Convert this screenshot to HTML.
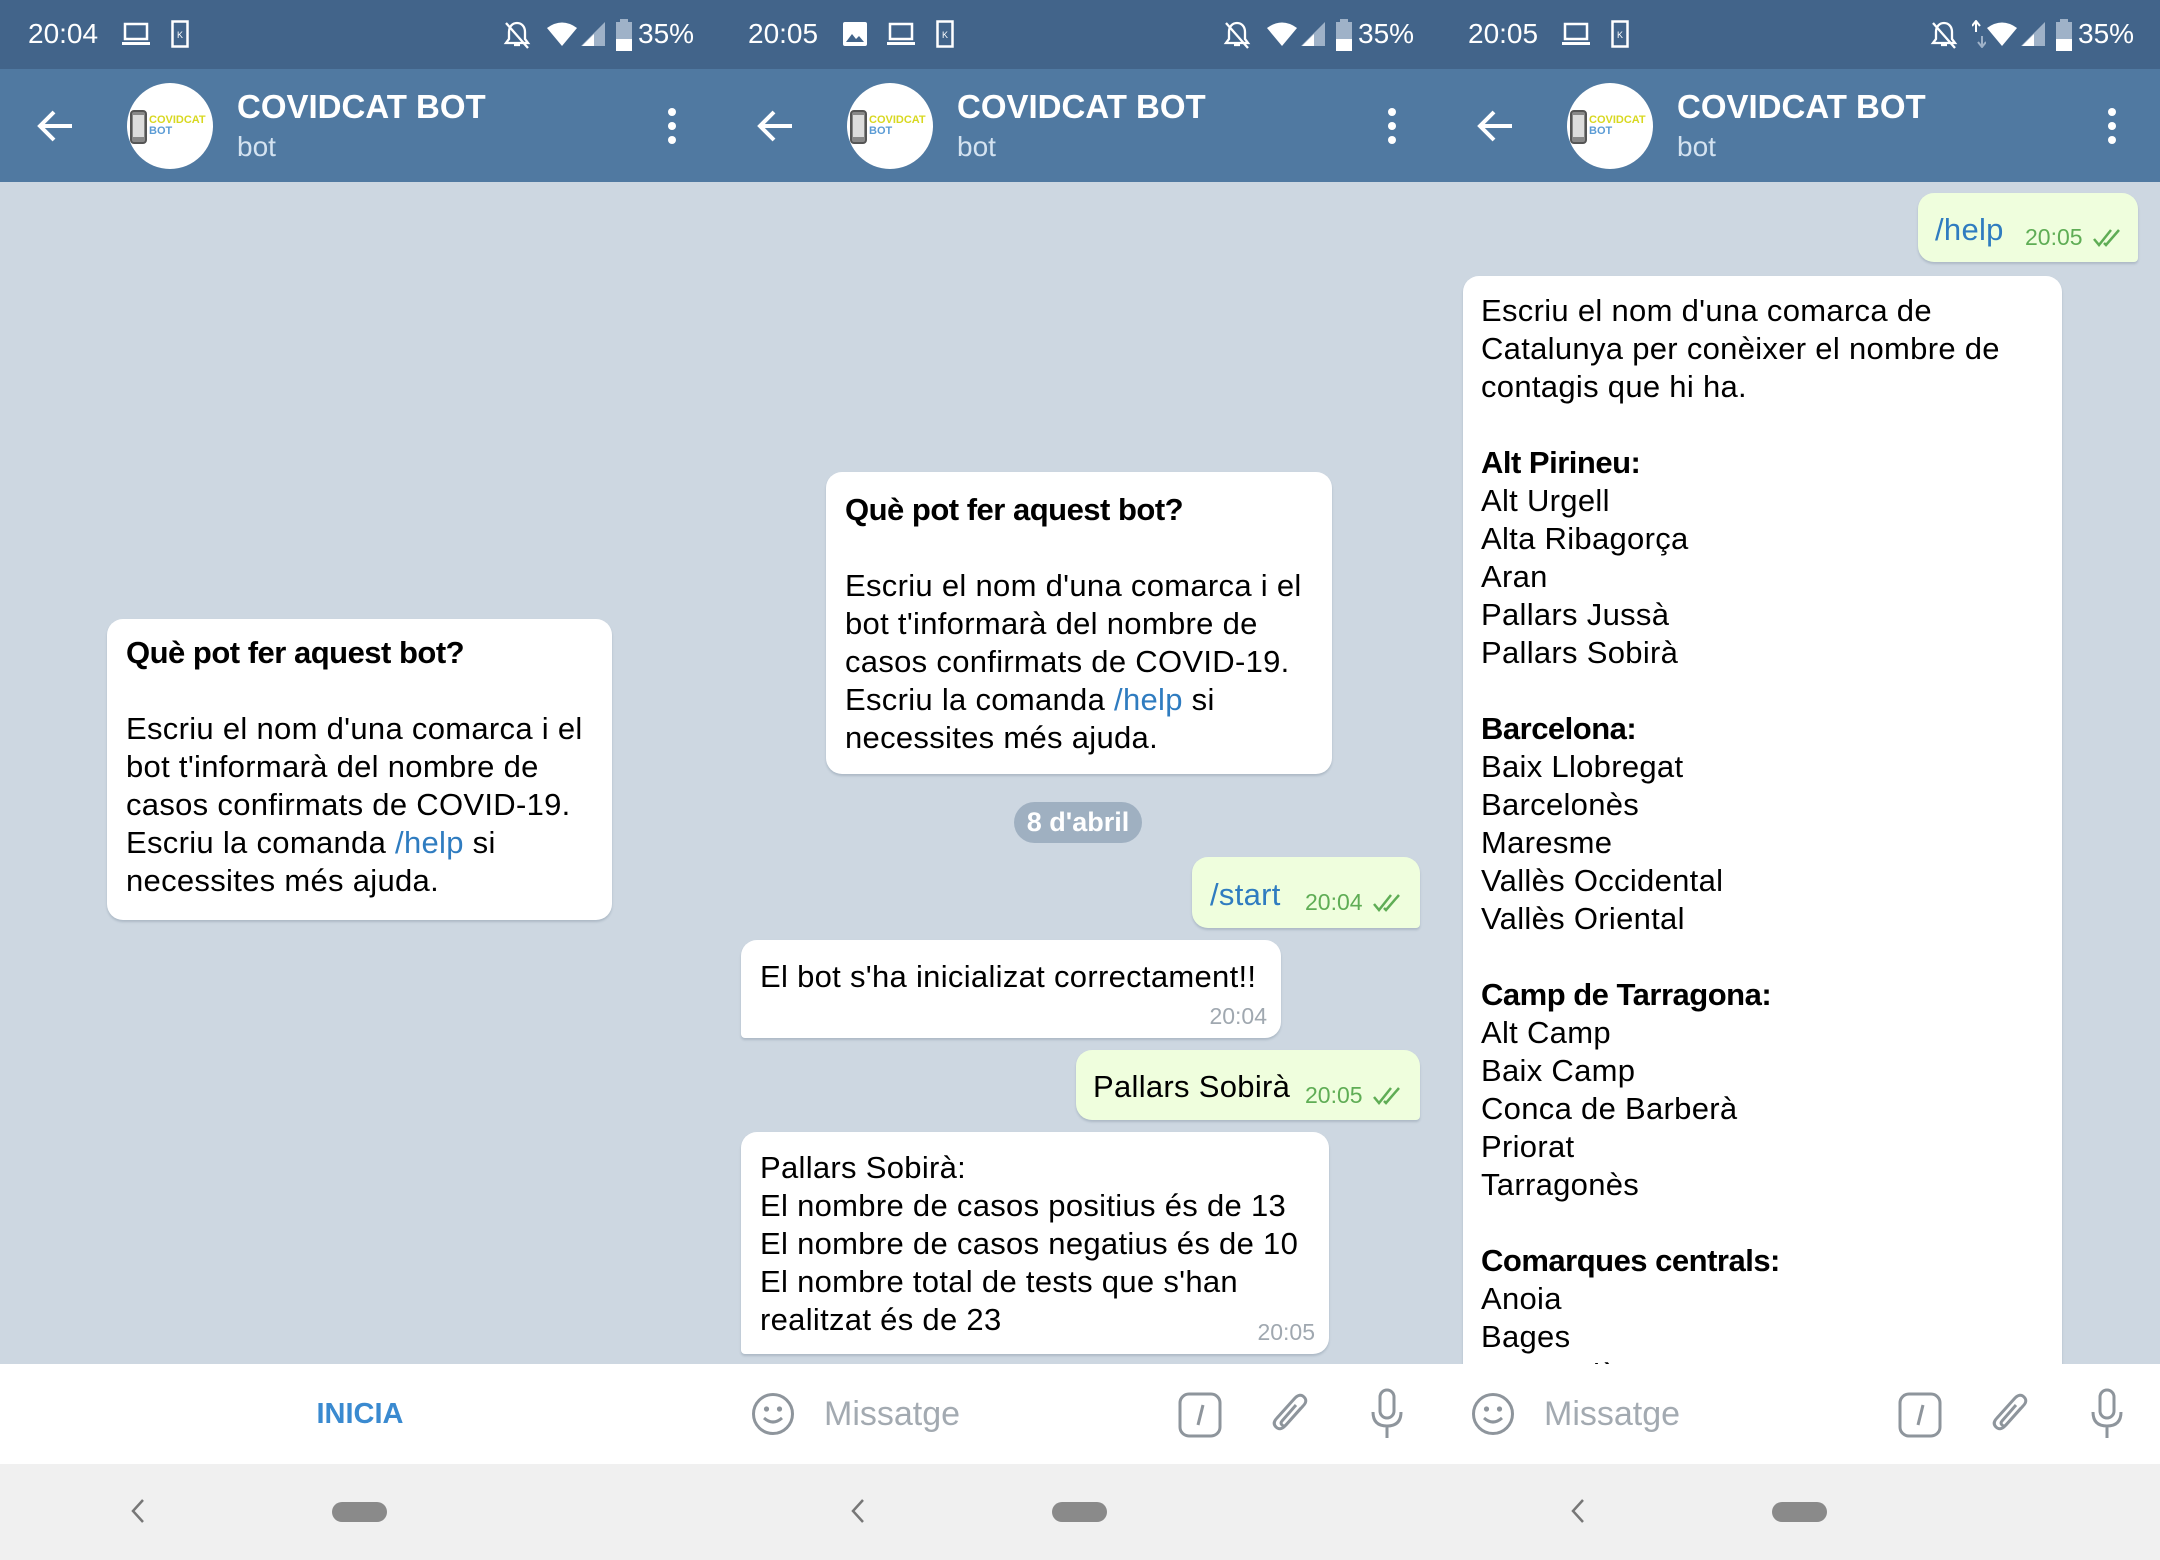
<!DOCTYPE html>
<html><head><meta charset="utf-8">
<style>
*{margin:0;padding:0;box-sizing:border-box}
body{width:2160px;height:1560px;overflow:hidden;position:relative;background:#cfd8e2;font-family:"Liberation Sans",Arial,sans-serif}
.panel{position:absolute;top:0;width:720px;height:1560px;overflow:hidden;background:#cdd7e1}
.sb{position:absolute;left:0;top:0;width:720px;height:69px;background:#42648a;color:#fff}
.hd{position:absolute;left:0;top:69px;width:720px;height:113px;background:#5079a1}
.abs{position:absolute}
.bub{position:absolute;background:#fff;border-radius:16px;box-shadow:0 2px 2px rgba(80,100,120,.25);font-size:31px;line-height:38px;color:#000;letter-spacing:0.3px}
.bub b{letter-spacing:-0.5px}
.out{background:#effedd}
.t{color:#a0a8b0;font-size:23px;letter-spacing:0}
.to{color:#5fad55;font-size:23px;letter-spacing:0}
.lnk{color:#2f7cc0}
.inp{position:absolute;left:0;top:1364px;width:720px;height:100px;background:#fff}
.nav{position:absolute;left:0;top:1464px;width:720px;height:96px;background:#f0f0f0}
.ph{position:absolute;left:104px;top:30px;font-size:34px;color:#a3aab1;line-height:40px}
.st{position:absolute;top:17px;font-size:28px;line-height:34px}
</style></head><body>

<!-- ============ PANEL 1 ============ -->
<div class="panel" style="left:0">
 <div class="sb">
  <div class="st" style="left:28px">20:04</div>
  <svg class="abs" style="left:121px;top:22px" width="30" height="26" viewBox="0 0 30 26"><rect x="4" y="2" width="22" height="15" fill="none" stroke="#fff" stroke-width="2.5"/><rect x="1" y="20" width="28" height="3" fill="#fff"/></svg>
  <svg class="abs" style="left:171px;top:20px" width="18" height="28" viewBox="0 0 18 28"><rect x="1.5" y="1.5" width="15" height="25" fill="none" stroke="#fff" stroke-width="2.5"/><text x="9" y="18" font-size="9" fill="#fff" text-anchor="middle" font-family="Liberation Sans">K</text></svg>
  <svg class="abs" style="left:503px;top:20px" width="28" height="30" viewBox="0 0 28 30"><path d="M14 3c-5 0-8 4-8 9v7l-3 4h22l-3-4v-7c0-5-3-9-8-9zM11 25h6" fill="none" stroke="#fff" stroke-width="2.3"/><path d="M3 3l22 25" stroke="#fff" stroke-width="2.3"/></svg>
  <svg class="abs" style="left:546px;top:21px" width="32" height="26" viewBox="0 0 32 26"><path d="M1 7Q16-4 31 7L16 25z" fill="#fff"/></svg>
  <svg class="abs" style="left:580px;top:21px" width="26" height="26" viewBox="0 0 26 26"><path d="M25 1V25H1z" fill="#9fb2c8"/><path d="M14 13V25H2z" fill="#fff"/></svg>
  <svg class="abs" style="left:615px;top:19px" width="18" height="32" viewBox="0 0 18 32"><rect x="5" y="0" width="8" height="4" fill="#9fb2c8"/><rect x="1" y="3" width="16" height="29" fill="#9fb2c8"/><rect x="1" y="20" width="16" height="12" fill="#fff"/></svg>
  <div class="st" style="left:638px">35%</div>
 </div>
 <div class="hd">
  <svg class="abs" style="left:36px;top:40px" width="38" height="34" viewBox="0 0 38 34"><path d="M36 17H4M18 3L4 17l14 14" fill="none" stroke="#fff" stroke-width="4"/></svg>
  <div class="abs" style="left:127px;top:14px;width:86px;height:86px;border-radius:50%;background:#fff"></div>
  <svg class="abs" style="left:129px;top:40px" width="80" height="36" viewBox="0 0 80 36"><rect x="2" y="2" width="15" height="32" rx="3" fill="#888" stroke="#555" stroke-width="2"/><rect x="4" y="6" width="11" height="22" fill="#ddd"/><text x="20" y="14" font-size="11" font-weight="bold" fill="#d8d820" font-family="Liberation Sans">COVIDCAT</text><text x="20" y="25" font-size="11" font-weight="bold" fill="#5a9bd5" font-family="Liberation Sans">BOT</text></svg>
  <div class="abs" style="left:237px;top:19px;font-size:33px;font-weight:bold;color:#fff;line-height:38px">COVIDCAT BOT</div>
  <div class="abs" style="left:237px;top:61px;font-size:28px;color:#d4e3f1;line-height:34px">bot</div>
  <svg class="abs" style="left:664px;top:36px" width="16" height="42" viewBox="0 0 16 42"><circle cx="8" cy="7" r="4" fill="#fff"/><circle cx="8" cy="21" r="4" fill="#fff"/><circle cx="8" cy="35" r="4" fill="#fff"/></svg>
 </div>

 <div class="bub" style="left:107px;top:619px;width:505px;height:301px;padding:15px 0 0 19px">
  <b>Què pot fer aquest bot?</b><br><br>Escriu el nom d'una comarca i el<br>bot t'informarà del nombre de<br>casos confirmats de COVID-19.<br>Escriu la comanda <span class="lnk">/help</span> si<br>necessites més ajuda.
 </div>

 <div class="inp"><div class="abs" style="left:0;width:720px;top:30px;text-align:center;font-size:29px;font-weight:bold;color:#3a8ad0;line-height:40px">INICIA</div></div>
 <div class="nav">
  <svg class="abs" style="left:130px;top:34px" width="16" height="26" viewBox="0 0 16 26"><path d="M13 2L3 13l10 11" fill="none" stroke="#777" stroke-width="2.5"/></svg>
  <div class="abs" style="left:332px;top:38px;width:55px;height:20px;border-radius:10px;background:#8a8a8a"></div>
 </div>
</div>

<!-- ============ PANEL 2 ============ -->
<div class="panel" style="left:720px">
 <div class="sb">
  <div class="st" style="left:28px">20:05</div>
  <svg class="abs" style="left:122px;top:21px" width="26" height="26" viewBox="0 0 26 26"><rect x="1" y="1" width="24" height="24" rx="2" fill="#fff"/><path d="M4 21l6-8 4 5 3-3 5 6z" fill="#42648a"/></svg>
  <svg class="abs" style="left:166px;top:22px" width="30" height="26" viewBox="0 0 30 26"><rect x="4" y="2" width="22" height="15" fill="none" stroke="#fff" stroke-width="2.5"/><rect x="1" y="20" width="28" height="3" fill="#fff"/></svg>
  <svg class="abs" style="left:216px;top:20px" width="18" height="28" viewBox="0 0 18 28"><rect x="1.5" y="1.5" width="15" height="25" fill="none" stroke="#fff" stroke-width="2.5"/><text x="9" y="18" font-size="9" fill="#fff" text-anchor="middle" font-family="Liberation Sans">K</text></svg>
  <svg class="abs" style="left:503px;top:20px" width="28" height="30" viewBox="0 0 28 30"><path d="M14 3c-5 0-8 4-8 9v7l-3 4h22l-3-4v-7c0-5-3-9-8-9zM11 25h6" fill="none" stroke="#fff" stroke-width="2.3"/><path d="M3 3l22 25" stroke="#fff" stroke-width="2.3"/></svg>
  <svg class="abs" style="left:546px;top:21px" width="32" height="26" viewBox="0 0 32 26"><path d="M1 7Q16-4 31 7L16 25z" fill="#fff"/></svg>
  <svg class="abs" style="left:580px;top:21px" width="26" height="26" viewBox="0 0 26 26"><path d="M25 1V25H1z" fill="#9fb2c8"/><path d="M14 13V25H2z" fill="#fff"/></svg>
  <svg class="abs" style="left:615px;top:19px" width="18" height="32" viewBox="0 0 18 32"><rect x="5" y="0" width="8" height="4" fill="#9fb2c8"/><rect x="1" y="3" width="16" height="29" fill="#9fb2c8"/><rect x="1" y="20" width="16" height="12" fill="#fff"/></svg>
  <div class="st" style="left:638px">35%</div>
 </div>
 <div class="hd">
  <svg class="abs" style="left:36px;top:40px" width="38" height="34" viewBox="0 0 38 34"><path d="M36 17H4M18 3L4 17l14 14" fill="none" stroke="#fff" stroke-width="4"/></svg>
  <div class="abs" style="left:127px;top:14px;width:86px;height:86px;border-radius:50%;background:#fff"></div>
  <svg class="abs" style="left:129px;top:40px" width="80" height="36" viewBox="0 0 80 36"><rect x="2" y="2" width="15" height="32" rx="3" fill="#888" stroke="#555" stroke-width="2"/><rect x="4" y="6" width="11" height="22" fill="#ddd"/><text x="20" y="14" font-size="11" font-weight="bold" fill="#d8d820" font-family="Liberation Sans">COVIDCAT</text><text x="20" y="25" font-size="11" font-weight="bold" fill="#5a9bd5" font-family="Liberation Sans">BOT</text></svg>
  <div class="abs" style="left:237px;top:19px;font-size:33px;font-weight:bold;color:#fff;line-height:38px">COVIDCAT BOT</div>
  <div class="abs" style="left:237px;top:61px;font-size:28px;color:#d4e3f1;line-height:34px">bot</div>
  <svg class="abs" style="left:664px;top:36px" width="16" height="42" viewBox="0 0 16 42"><circle cx="8" cy="7" r="4" fill="#fff"/><circle cx="8" cy="21" r="4" fill="#fff"/><circle cx="8" cy="35" r="4" fill="#fff"/></svg>
 </div>

 <div class="bub" style="left:106px;top:472px;width:506px;height:302px;padding:19px 0 0 19px">
  <b>Què pot fer aquest bot?</b><br><br>Escriu el nom d'una comarca i el<br>bot t'informarà del nombre de<br>casos confirmats de COVID-19.<br>Escriu la comanda <span class="lnk">/help</span> si<br>necessites més ajuda.
 </div>

 <div class="abs" style="left:294px;top:802px;width:128px;height:41px;border-radius:21px;background:#9fb0c1;color:#fff;font-size:27px;font-weight:bold;text-align:center;line-height:41px">8 d'abril</div>

 <div class="bub out" style="left:472px;top:857px;width:228px;height:71px;border-bottom-right-radius:4px">
  <span class="abs lnk" style="left:18px;top:19px">/start</span>
  <span class="abs to" style="left:113px;top:32px;line-height:26px">20:04</span>
  <svg class="abs" style="left:180px;top:36px" width="30" height="20" viewBox="0 0 30 20"><path d="M2 11l5 6L19 2M12 15l2 2L27 2" fill="none" stroke="#5fad55" stroke-width="2.5"/></svg>
 </div>

 <div class="bub" style="left:21px;top:940px;width:540px;height:98px;border-bottom-left-radius:4px">
  <span class="abs" style="left:19px;top:18px;white-space:nowrap">El bot s'ha inicializat correctament!!</span>
  <span class="abs t" style="right:14px;top:63px;line-height:26px">20:04</span>
 </div>

 <div class="bub out" style="left:356px;top:1050px;width:344px;height:70px;border-bottom-right-radius:4px">
  <span class="abs" style="left:17px;top:18px;white-space:nowrap">Pallars Sobirà</span>
  <span class="abs to" style="left:229px;top:32px;line-height:26px">20:05</span>
  <svg class="abs" style="left:296px;top:36px" width="30" height="20" viewBox="0 0 30 20"><path d="M2 11l5 6L19 2M12 15l2 2L27 2" fill="none" stroke="#5fad55" stroke-width="2.5"/></svg>
 </div>

 <div class="bub" style="left:21px;top:1132px;width:588px;height:222px;padding:17px 0 0 19px;border-bottom-left-radius:4px">
  Pallars Sobirà:<br>El nombre de casos positius és de 13<br>El nombre de casos negatius és de 10<br>El nombre total de tests que s'han<br>realitzat és de 23
  <span class="abs t" style="right:14px;top:187px;line-height:26px">20:05</span>
 </div>

 <div class="inp">
  <svg class="abs" style="left:31px;top:28px" width="44" height="44" viewBox="0 0 44 44"><circle cx="22" cy="22" r="19.5" fill="none" stroke="#8e959c" stroke-width="3"/><circle cx="15.5" cy="17" r="2.6" fill="#8e959c"/><circle cx="28.5" cy="17" r="2.6" fill="#8e959c"/><path d="M13 26q9 8 18 0" fill="none" stroke="#8e959c" stroke-width="3"/></svg>
  <div class="ph">Missatge</div>
  <svg class="abs" style="left:458px;top:28px" width="44" height="46" viewBox="0 0 44 46"><rect x="2" y="2" width="40" height="42" rx="9" fill="none" stroke="#8e959c" stroke-width="3"/><path d="M25 13l-5 20" stroke="#8e959c" stroke-width="3"/></svg>
  <svg class="abs" style="left:550px;top:26px" width="44" height="50" viewBox="0 0 44 50"><path d="M31 18L15 36q-5 5-9 1t1-9L25 8q5-5 9-1t-1 9L16 35q-2 2-4 0t0-4l14-16" fill="none" stroke="#8e959c" stroke-width="3"/></svg>
  <svg class="abs" style="left:650px;top:24px" width="34" height="52" viewBox="0 0 34 52"><rect x="10" y="2" width="14" height="28" rx="7" fill="none" stroke="#8e959c" stroke-width="3"/><path d="M3 24q0 14 14 14t14-14M17 38v12" fill="none" stroke="#8e959c" stroke-width="3"/></svg>
 </div>
 <div class="nav">
  <svg class="abs" style="left:130px;top:34px" width="16" height="26" viewBox="0 0 16 26"><path d="M13 2L3 13l10 11" fill="none" stroke="#777" stroke-width="2.5"/></svg>
  <div class="abs" style="left:332px;top:38px;width:55px;height:20px;border-radius:10px;background:#8a8a8a"></div>
 </div>
</div>

<!-- ============ PANEL 3 ============ -->
<div class="panel" style="left:1440px">
 <div class="sb">
  <div class="st" style="left:28px">20:05</div>
  <svg class="abs" style="left:121px;top:22px" width="30" height="26" viewBox="0 0 30 26"><rect x="4" y="2" width="22" height="15" fill="none" stroke="#fff" stroke-width="2.5"/><rect x="1" y="20" width="28" height="3" fill="#fff"/></svg>
  <svg class="abs" style="left:171px;top:20px" width="18" height="28" viewBox="0 0 18 28"><rect x="1.5" y="1.5" width="15" height="25" fill="none" stroke="#fff" stroke-width="2.5"/><text x="9" y="18" font-size="9" fill="#fff" text-anchor="middle" font-family="Liberation Sans">K</text></svg>
  <svg class="abs" style="left:490px;top:20px" width="28" height="30" viewBox="0 0 28 30"><path d="M14 3c-5 0-8 4-8 9v7l-3 4h22l-3-4v-7c0-5-3-9-8-9zM11 25h6" fill="none" stroke="#fff" stroke-width="2.3"/><path d="M3 3l22 25" stroke="#fff" stroke-width="2.3"/></svg>
  <svg class="abs" style="left:532px;top:20px" width="14" height="28" viewBox="0 0 14 28"><path d="M4 12V2M0 6l4-5 4 5" fill="none" stroke="#fff" stroke-width="2"/><path d="M10 16v10M6 22l4 5 4-5" fill="none" stroke="#9fb2c8" stroke-width="2"/></svg>
  <svg class="abs" style="left:546px;top:21px" width="32" height="26" viewBox="0 0 32 26"><path d="M1 7Q16-4 31 7L16 25z" fill="#fff"/></svg>
  <svg class="abs" style="left:580px;top:21px" width="26" height="26" viewBox="0 0 26 26"><path d="M25 1V25H1z" fill="#9fb2c8"/><path d="M14 13V25H2z" fill="#fff"/></svg>
  <svg class="abs" style="left:615px;top:19px" width="18" height="32" viewBox="0 0 18 32"><rect x="5" y="0" width="8" height="4" fill="#9fb2c8"/><rect x="1" y="3" width="16" height="29" fill="#9fb2c8"/><rect x="1" y="20" width="16" height="12" fill="#fff"/></svg>
  <div class="st" style="left:638px">35%</div>
 </div>
 <div class="hd">
  <svg class="abs" style="left:36px;top:40px" width="38" height="34" viewBox="0 0 38 34"><path d="M36 17H4M18 3L4 17l14 14" fill="none" stroke="#fff" stroke-width="4"/></svg>
  <div class="abs" style="left:127px;top:14px;width:86px;height:86px;border-radius:50%;background:#fff"></div>
  <svg class="abs" style="left:129px;top:40px" width="80" height="36" viewBox="0 0 80 36"><rect x="2" y="2" width="15" height="32" rx="3" fill="#888" stroke="#555" stroke-width="2"/><rect x="4" y="6" width="11" height="22" fill="#ddd"/><text x="20" y="14" font-size="11" font-weight="bold" fill="#d8d820" font-family="Liberation Sans">COVIDCAT</text><text x="20" y="25" font-size="11" font-weight="bold" fill="#5a9bd5" font-family="Liberation Sans">BOT</text></svg>
  <div class="abs" style="left:237px;top:19px;font-size:33px;font-weight:bold;color:#fff;line-height:38px">COVIDCAT BOT</div>
  <div class="abs" style="left:237px;top:61px;font-size:28px;color:#d4e3f1;line-height:34px">bot</div>
  <svg class="abs" style="left:664px;top:36px" width="16" height="42" viewBox="0 0 16 42"><circle cx="8" cy="7" r="4" fill="#fff"/><circle cx="8" cy="21" r="4" fill="#fff"/><circle cx="8" cy="35" r="4" fill="#fff"/></svg>
 </div>

 <div class="bub out" style="left:478px;top:193px;width:220px;height:69px;border-bottom-right-radius:4px">
  <span class="abs lnk" style="left:17px;top:18px">/help</span>
  <span class="abs to" style="left:107px;top:31px;line-height:26px">20:05</span>
  <svg class="abs" style="left:174px;top:35px" width="30" height="20" viewBox="0 0 30 20"><path d="M2 11l5 6L19 2M12 15l2 2L27 2" fill="none" stroke="#5fad55" stroke-width="2.5"/></svg>
 </div>

 <div class="bub" style="left:23px;top:276px;width:599px;height:1120px;padding:16px 0 0 18px">
  Escriu el nom d'una comarca de<br>Catalunya per conèixer el nombre de<br>contagis que hi ha.<br><br>
  <b>Alt Pirineu:</b><br>Alt Urgell<br>Alta Ribagorça<br>Aran<br>Pallars Jussà<br>Pallars Sobirà<br><br>
  <b>Barcelona:</b><br>Baix Llobregat<br>Barcelonès<br>Maresme<br>Vallès Occidental<br>Vallès Oriental<br><br>
  <b>Camp de Tarragona:</b><br>Alt Camp<br>Baix Camp<br>Conca de Barberà<br>Priorat<br>Tarragonès<br><br>
  <b>Comarques centrals:</b><br>Anoia<br>Bages<br>Berguedà
 </div>

 <div class="inp">
  <svg class="abs" style="left:31px;top:28px" width="44" height="44" viewBox="0 0 44 44"><circle cx="22" cy="22" r="19.5" fill="none" stroke="#8e959c" stroke-width="3"/><circle cx="15.5" cy="17" r="2.6" fill="#8e959c"/><circle cx="28.5" cy="17" r="2.6" fill="#8e959c"/><path d="M13 26q9 8 18 0" fill="none" stroke="#8e959c" stroke-width="3"/></svg>
  <div class="ph">Missatge</div>
  <svg class="abs" style="left:458px;top:28px" width="44" height="46" viewBox="0 0 44 46"><rect x="2" y="2" width="40" height="42" rx="9" fill="none" stroke="#8e959c" stroke-width="3"/><path d="M25 13l-5 20" stroke="#8e959c" stroke-width="3"/></svg>
  <svg class="abs" style="left:550px;top:26px" width="44" height="50" viewBox="0 0 44 50"><path d="M31 18L15 36q-5 5-9 1t1-9L25 8q5-5 9-1t-1 9L16 35q-2 2-4 0t0-4l14-16" fill="none" stroke="#8e959c" stroke-width="3"/></svg>
  <svg class="abs" style="left:650px;top:24px" width="34" height="52" viewBox="0 0 34 52"><rect x="10" y="2" width="14" height="28" rx="7" fill="none" stroke="#8e959c" stroke-width="3"/><path d="M3 24q0 14 14 14t14-14M17 38v12" fill="none" stroke="#8e959c" stroke-width="3"/></svg>
 </div>
 <div class="nav">
  <svg class="abs" style="left:130px;top:34px" width="16" height="26" viewBox="0 0 16 26"><path d="M13 2L3 13l10 11" fill="none" stroke="#777" stroke-width="2.5"/></svg>
  <div class="abs" style="left:332px;top:38px;width:55px;height:20px;border-radius:10px;background:#8a8a8a"></div>
 </div>
</div>
</body></html>
